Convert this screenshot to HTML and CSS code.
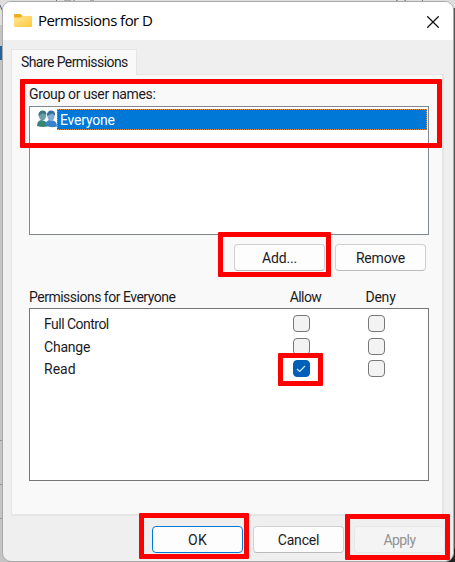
FILE: index.html
```html
<!DOCTYPE html>
<html lang="en">
<head>
<meta charset="utf-8">
<title>Permissions for D</title>
<link rel="stylesheet" href="styles.css">
</head>
<body>
<svg class="backdrop" width="455" height="562" aria-hidden="true">
  <rect width="455" height="562" fill="#c4c4c4"/>
  <rect width="455" height="25" fill="#dedede"/>
  <path d="M56.500 0v2M64 1h7M74 0v1M90 1h4M396 0l3 2M403 2l3-2M422.500 0v2" stroke="#777" fill="none"/>
  <path d="M0 5l2 5" stroke="#567" fill="none"/>
  <rect y="46" width="3" height="14" fill="#23659b"/>
  <path d="M0 440.500h3M0 484.500h3M0 518.500h3" stroke="#999"/>
  <rect x="453" y="8" width="2" height="554" fill="#555"/>
  <path d="M443 562h12v-14z" fill="#222"/>
</svg>
<main class="dialog">
  <header class="titlebar">
    <svg class="folder" width="18" height="14" viewBox="0 0 18 14">
      <defs><linearGradient id="fold" x2="1" y2="1"><stop stop-color="#ffe69a"/><stop offset="1" stop-color="#ffca3c"/></linearGradient></defs>
      <path d="M0 1q0-1 1-1h5.500l2 2H17q1 0 1 1v4H0z" fill="#f0ad1d"/>
      <path d="M0 3.500h6.500l2-1.500H17q1 0 1 1v9q0 1-1 1H1q-1 0-1-1z" fill="url(#fold)"/>
    </svg>
    <h1><span class="t-title">Permissions for D</span></h1>
    <svg class="close" width="12" height="12" viewBox="0 0 12 12"><path d="M.3.300l11.400 11.400M11.700.300L.3 11.700" stroke="#111" stroke-width="1.250"/></svg>
  </header>
  <div class="tab"><span class="t-tab">Share Permissions</span></div>
  <section class="panel">
    <p class="label"><span class="t-group">Group or user names:</span></p>
    <div class="list users">
      <div class="user">
        <svg width="20" height="18" viewBox="0 0 20 18">
          <path d="M0 16q0-5 4-6l4 1 4 5q-6 2-12 0z" fill="#388577"/>
          <ellipse cx="5.500" cy="5.500" rx="3.700" ry="4.800" fill="#6b9fa8"/>
          <path d="M1.500 6q-.5-5 4-5.500 4 0 4 4l-4-1z" fill="#397884"/>
          <path d="M8 15q1-4 4-5l4 .5q4 1 4 6-6 2-12-1.500z" fill="#3b83c9"/>
          <ellipse cx="14" cy="6" rx="3.600" ry="5" fill="#81add0"/>
          <path d="M10 6q-.5-5 4-5.500 4.500 0 4 5l-3-2z" fill="#376f9b"/>
        </svg>
        <div class="selected"><span class="t-everyone">Everyone</span></div>
      </div>
    </div>
    <div class="actions">
      <button><span class="t-add">Add...</span></button>
      <button><span class="t-remove">Remove</span></button>
    </div>
    <div class="headings"><span class="name"><span class="t-perm">Permissions for Everyone</span></span><span class="col"><span class="t-allow">Allow</span></span><span class="col"><span class="t-deny">Deny</span></span></div>
    <div class="list permissions">
      <div class="row"><span class="name"><span class="t-full">Full Control</span></span><span class="cell"><i class="check"></i></span><span class="cell"><i class="check"></i></span></div>
      <div class="row"><span class="name"><span class="t-change">Change</span></span><span class="cell"><i class="check"></i></span><span class="cell"><i class="check"></i></span></div>
      <div class="row"><span class="name"><span class="t-read">Read</span></span><span class="cell"><i class="check on"><svg width="10" height="8" viewBox="0 0 10 8"><path d="M1 4l2.700 2.500L9 1" fill="none" stroke="#d5e8fa" stroke-width="1.200"/></svg></i></span><span class="cell"><i class="check"></i></span></div>
    </div>
  </section>
  <footer>
    <button class="primary"><span class="t-ok">OK</span></button>
    <button><span class="t-cancel">Cancel</span></button>
    <button class="disabled"><span class="t-apply">Apply</span></button>
  </footer>
</main>
<div class="mark mark-group"></div>
<div class="mark mark-add"></div>
<div class="mark mark-read"></div>
<div class="mark mark-ok"></div>
<div class="mark mark-apply"></div>
</body>
</html>
```

FILE: styles.css
```css
* { box-sizing: border-box; }
body { margin: 0; width: 455px; height: 562px; overflow: hidden; position: relative; font: 14px/18px Roboto, "Liberation Sans", sans-serif; color: #1b1b1f; }
.backdrop { position: absolute; inset: 0; z-index: -1; }
.dialog { width: 452px; height: 561px; margin: 1px 0 0 2px; border: 1px solid #aaa; border-radius: 9px; background: #efefef; overflow: hidden; }
.titlebar { height: 38px; background: #fff; display: flex; align-items: center; padding: 0 14px 0 11px; }
h1 { flex: 1; margin: -2px 0 0 6px; font: 15px/20px "Open Sans", sans-serif; color: #000; }
h1 span, p span, button span, .tab span, .name span, .col span, .selected span { display: inline-block; white-space: nowrap; }
.t-title { letter-spacing: -.54px; }
.t-tab { letter-spacing: -.58px; }
.t-group { letter-spacing: -.36px; }
.t-everyone { letter-spacing: -.2px; }
.t-perm { letter-spacing: -.5px; }
.t-full { letter-spacing: -.52px; }
.t-change, .t-add, .t-remove, .t-cancel { letter-spacing: -.2px; }
.t-allow, .t-apply { letter-spacing: -.6px; }
.t-deny { letter-spacing: -.2px; }
.t-ok { letter-spacing: .4px; }
.close { margin-top: 1px; }
.tab { width: 126px; height: 26px; margin: 9px 0 0 8px; padding: 3px 0 0 9px; border: 1px solid #e5e5e5; border-bottom: 0; background: #f9f9f9; position: relative; z-index: 1; }
.panel { width: 433px; height: 442px; margin: -1px 0 0 8px; padding: 10px 0 0 17px; border: 1px solid #e5e5e5; border-width: 1px 2px 2px 1px; background: #f9f9f9; }
.label { margin: 0 0 3px; }
.list { width: 400px; border: 1px solid #828790; background: #fff; }
.users { height: 129px; padding-top: 2px; }
.user { display: flex; padding-left: 7px; padding-right: 1px; }
.user svg { flex: none; margin-top: 1px; }
.selected { flex: 1; height: 21px; background: #0078d7; color: #fff; border: 1px dotted #d5894b; padding: 1px 0 0 2px; }
.actions { display: flex; justify-content: flex-end; gap: 10px; width: 397px; margin-top: 9px; }
button { display: flex; justify-content: center; align-items: center; width: 91px; height: 27px; padding: 0; border: 1px solid #d0d0d0; border-bottom-color: #bbb; border-radius: 4px; background: #fdfdfd; color: inherit; font: inherit; }
.headings { display: flex; height: 18px; margin: 17px 0 2px; }
.headings .name { width: 239px; }
.col { width: 75px; text-align: center; }
.permissions { height: 173px; padding: 4px 0 0 14px; border-color: #767676; }
.row { display: flex; height: 22.500px; }
.row .name { width: 219.500px; padding-top: 2px; }
.cell { width: 75px; display: flex; justify-content: center; padding-top: 2px; }
.check { width: 17px; height: 17px; border: 1px solid #777; border-radius: 4px; background: #f3f3f3; display: flex; align-items: center; justify-content: center; }
.check.on { background: #005fb8; border-color: #005fb8; }
footer { display: flex; justify-content: flex-end; gap: 10px; margin: 10px 8px 0 0; }
.primary { border-color: #0078d4; }
.disabled { background: #f4f4f4; border-color: #e7e7e7; color: #929292; }
.mark { position: absolute; border: 5px solid #f00; border-radius: 1px; }
.mark-group { left: 20px; top: 79px; width: 422px; height: 69px; }
.mark-add { left: 218px; top: 232px; width: 113px; height: 45px; }
.mark-read { left: 278px; top: 353px; width: 45px; height: 33px; }
.mark-ok { left: 139px; top: 513px; width: 110px; height: 46px; }
.mark-apply { left: 345px; top: 514px; width: 105px; height: 46px; }
```
